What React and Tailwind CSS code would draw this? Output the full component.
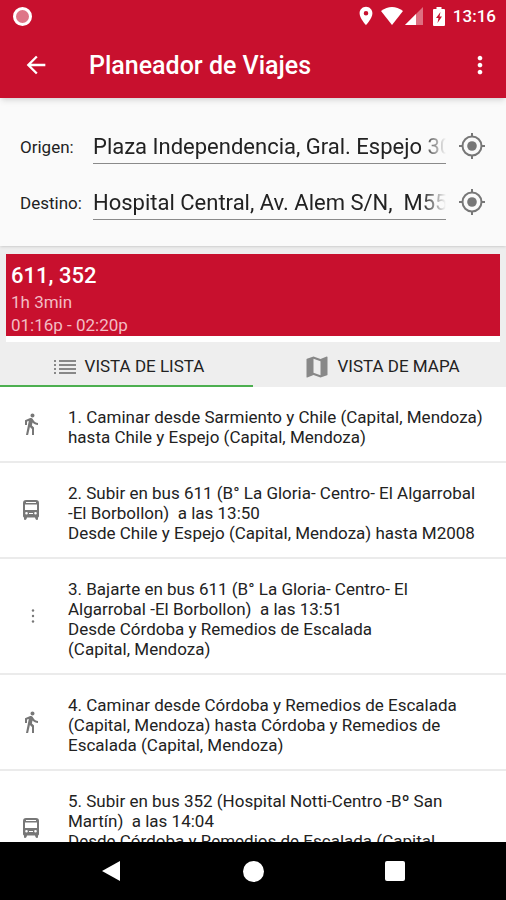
import { MdArrowBack, MdDirectionsWalk, MdLocationOn, MdMap, MdMoreVert } from 'react-icons/md'

const steps = [
  {
    type: 'walk',
    text: `1. Caminar desde Sarmiento y Chile (Capital, Mendoza)
hasta Chile y Espejo (Capital, Mendoza)`,
  },
  {
    type: 'bus',
    text: `2. Subir en bus 611 (B° La Gloria- Centro- El Algarrobal
-El Borbollon)  a las 13:50
Desde Chile y Espejo (Capital, Mendoza) hasta M2008`,
  },
  {
    type: 'stop',
    text: `3. Bajarte en bus 611 (B° La Gloria- Centro- El
Algarrobal -El Borbollon)  a las 13:51
Desde Córdoba y Remedios de Escalada
(Capital, Mendoza)`,
  },
  {
    type: 'walk',
    text: `4. Caminar desde Córdoba y Remedios de Escalada
(Capital, Mendoza) hasta Córdoba y Remedios de
Escalada (Capital, Mendoza)`,
  },
  {
    type: 'bus',
    text: `5. Subir en bus 352 (Hospital Notti-Centro -Bº San
Martín)  a las 14:04
Desde Córdoba y Remedios de Escalada (Capital,
Mendoza)`,
  },
]

const BusIcon = () => (
  <svg viewBox="0 0 18 20" className="h-5 w-[18px]" fill="currentColor">
    <path
      fillRule="evenodd"
      d="M4 0h10q3 0 3 3v13q0 1-1 1.500V19q0 1-1 1t-1.500-1L13 17.500H5L4.500 19q-.5 1-1.500 1t-1-1v-1.500Q1 17 1 16V3q0-3 3-3zM3 4.500V10h12V4.500zM4.500 12a1.300 1.300 0 1 0 0 2.600 1.300 1.300 0 0 0 0-2.600zM13.500 12a1.300 1.300 0 1 0 0 2.600 1.300 1.300 0 0 0 0-2.600zM4 2v1h10V2zM7 13h4v1H7z"
    />
  </svg>
)

const DotsIcon = () => (
  <svg viewBox="0 0 4 16" className="ml-1 h-4 w-1" fill="currentColor">
    <circle cx="2" cy="2.500" r="1.200" />
    <circle cx="2" cy="8" r="1.200" />
    <circle cx="2" cy="13.500" r="1.200" />
  </svg>
)

const ListIcon = () => (
  <svg viewBox="0 0 24 16" className="h-4 w-6" fill="currentColor">
    <path d="M1 1h2v2H1zM6 1h17v2H6zM1 5h2v2H1zM6 5h17v2H6zM1 9h2v2H1zM6 9h17v2H6zM1 13h2v2H1zM6 13h17v2H6z" />
  </svg>
)

const TargetIcon = () => (
  <svg viewBox="0 0 28 28" className="h-7 w-7" fill="none" stroke="currentColor" strokeWidth="2">
    <circle cx="14" cy="14" r="9.500" />
    <circle cx="14" cy="14" r="4.800" fill="currentColor" stroke="none" />
    <path d="M14 1v4M14 23v4M1 14h4M23 14h4" />
  </svg>
)

const StepIcon = ({ type }) => {
  if (type === 'walk') return <MdDirectionsWalk size={24} />
  if (type === 'bus') return <BusIcon />
  return <DotsIcon />
}

const StatusBar = () => (
  <div className="flex h-8 items-center justify-between pr-2.5 pl-[13px] text-white">
    <span className="h-[19px] w-[19px] rounded-full border-[3px] border-white bg-[#de7688]" />
    <div className="flex items-center">
      <MdLocationOn size={22} />
      <svg viewBox="0 0 22 18" className="ml-1 h-[18px] w-[22px]" fill="currentColor">
        <path d="M0 4Q11-4 22 4L11 18z" />
      </svg>
      <svg viewBox="0 0 18 18" className="ml-0.5 h-[18px] w-[18px]" fill="currentColor">
        <path d="M18 0v18H0z" opacity=".4" />
        <path d="M11 7v11H0z" />
      </svg>
      <svg viewBox="0 0 12 19" className="mr-2 ml-2.5 h-[19px] w-3" fill="currentColor">
        <path fillRule="evenodd" d="M3.500 0h5v2H11q1 0 1 1v15q0 1-1 1H1q-1 0-1-1V3q0-1 1-1h2.500zM7.500 5L3 11h2.500L4.500 16 9 9.500H6.500z" />
      </svg>
      <span className="text-[17px] leading-6 font-medium">13:16</span>
    </div>
  </div>
)

const PlaceField = ({ id, label, value }) => (
  <div className="flex h-14 items-center px-5">
    <label htmlFor={id} className="w-[73px] shrink-0 pt-0.5 text-[17px] leading-6 text-[#222]">
      {label}
    </label>
    <div className="min-w-0 flex-1 border-b border-[#8a8a8a]">
      <input
        id={id}
        type="text"
        defaultValue={value}
        className="block h-[34px] w-full pt-0.5 text-[22px] text-[#222] outline-none [mask-image:linear-gradient(to_left,transparent,black_24px)]"
      />
    </div>
    <button type="button" aria-label={`Ubicar ${id}`} className="ml-3 text-[#777]">
      <TargetIcon />
    </button>
  </div>
)

const App = () => (
  <div className="flex h-screen flex-col overflow-hidden bg-[#eee] font-[Roboto,sans-serif]">
    <header className="z-10 shrink-0 bg-[#c8102e] text-white shadow-md">
      <StatusBar />
      <div className="flex h-[66px] items-center pr-3 pl-[22px]">
        <button type="button" aria-label="Volver">
          <MdArrowBack size={28} />
        </button>
        <h1 className="ml-[39px] flex-1 pt-0.5 text-[25px] leading-8 font-medium">Planeador de Viajes</h1>
        <button type="button" aria-label="Más opciones">
          <MdMoreVert size={28} />
        </button>
      </div>
    </header>

    <form className="shrink-0 bg-[#fafafa] pt-5 pb-4 shadow">
      <PlaceField id="origen" label="Origen:" value="Plaza Independencia, Gral. Espejo 300" />
      <PlaceField id="destino" label="Destino:" value="Hospital Central, Av. Alem S/N,  M5500" />
    </form>

    <section className="mx-1.5 mt-2 shrink-0 border-b-[6px] border-white">
      <div className="bg-[#c8102e] px-[5px] pt-2">
        <h2 className="text-[22px] leading-7 font-medium text-white">611, 352</h2>
        <p className="text-[17px] leading-6 text-[#f3bcc4]">1h 3min</p>
        <p className="text-[17px] leading-[22px] text-[#f3bcc4]">01:16p - 02:20p</p>
      </div>
    </section>

    <div role="tablist" className="grid h-[45px] shrink-0 grid-cols-2 text-[17px] text-[#222]">
      <button type="button" role="tab" aria-selected="true" className="flex items-center justify-center gap-2 border-b-2 border-[#4caf50] pt-1.5 pl-1">
        <span className="text-[#888]">
          <ListIcon />
        </span>
        VISTA DE LISTA
      </button>
      <button type="button" role="tab" aria-selected="false" className="flex items-center justify-center gap-1.5 border-b-2 border-transparent pt-1.5 pl-1">
        <MdMap size={28} className="text-[#888]" />
        VISTA DE MAPA
      </button>
    </div>

    <ol className="min-h-0 flex-1 overflow-hidden bg-white">
      {steps.map((step) => (
        <li key={step.text} className="flex items-center border-b-2 border-[#ebebeb]">
          <span className="flex w-[62px] shrink-0 justify-center text-[#777]">
            <StepIcon type={step.type} />
          </span>
          <p className="pt-5 pb-3.5 pl-1.5 text-[17px] leading-5 whitespace-pre text-[#222]">{step.text}</p>
        </li>
      ))}
    </ol>

    <nav className="flex h-[58px] shrink-0 items-center justify-between bg-black px-[20%] text-white">
      <button type="button" aria-label="Atrás">
        <svg viewBox="0 0 20 22" className="h-[22px] w-5" fill="currentColor">
          <path d="M19 1v20L1 11z" />
        </svg>
      </button>
      <button type="button" aria-label="Inicio" className="h-[21px] w-[21px] rounded-full bg-white" />
      <button type="button" aria-label="Recientes" className="h-5 w-5 rounded-xs bg-white" />
    </nav>
  </div>
)

export default App
